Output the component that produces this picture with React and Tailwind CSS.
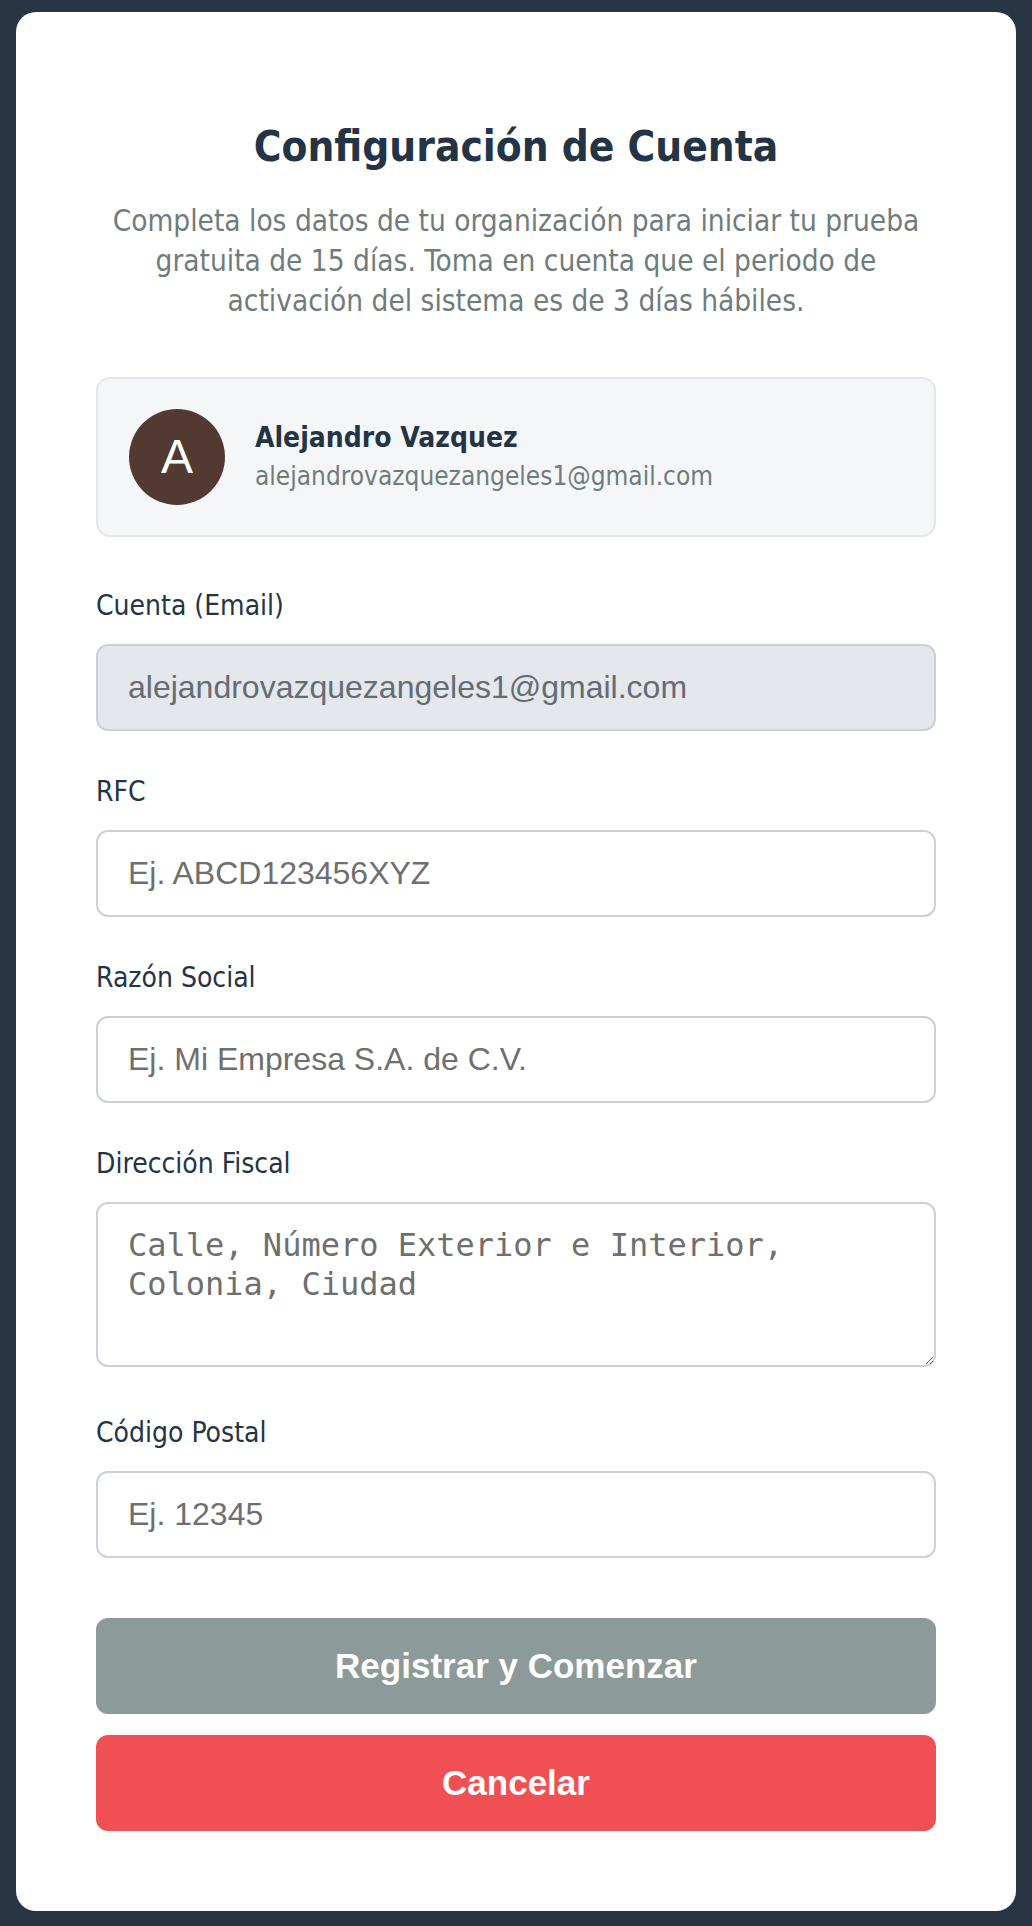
export default function App() {
  const font = { fontFamily: '"DejaVu Sans Condensed", "DejaVu Sans", sans-serif' };
  return (
    <div className="min-h-[1926px] bg-[#283545] px-4 pt-[12px] pb-4">
      <div className="bg-white rounded-[20px] px-[80px] pt-[109px] pb-[80px]" style={font}>
        {/* Encabezado */}
        <div className="text-center">
          <h1 className="text-[42px] leading-[52px] font-bold text-[#243447]">Configuración de Cuenta</h1>
          <p className="mt-[28px] text-[29.5px] leading-[40px] text-[#6f7c7c]">
            Completa los datos de tu organización para iniciar tu prueba gratuita de 15 días. Toma en cuenta que el periodo de activación del sistema es de 3 días hábiles.
          </p>
        </div>

        {/* Usuario */}
        <div className="mt-[56px] h-[160px] flex items-center gap-[30px] px-[31px] bg-[#f5f6f8] border-2 border-[#e3e6ea] rounded-[14px]">
          <div className="w-[96px] h-[96px] rounded-full bg-[#523a32] flex items-center justify-center text-white text-[48px] shrink-0" style={{ fontFamily: '"Liberation Sans", Arial, sans-serif' }}>
            A
          </div>
          <div>
            <p className="text-[28px] leading-[38px] font-bold text-[#243447]">Alejandro Vazquez</p>
            <p className="text-[26px] leading-[38px] text-[#707c7c]">alejandrovazquezangeles1@gmail.com</p>
          </div>
        </div>

        {/* Formulario */}
        <form className="mt-[48px]">
          <Field label="Cuenta (Email)">
            <input
              disabled
              value="alejandrovazquezangeles1@gmail.com"
              readOnly
              className="w-full h-[87px] px-[30px] bg-[#e4e7eb] border-2 border-[#ccd1d6] rounded-[12px] text-[32px] text-[#646c74] outline-none"
              style={{ fontFamily: '"Liberation Sans", Arial, sans-serif' }}
            />
          </Field>
          <Field label="RFC">
            <TextInput placeholder="Ej. ABCD123456XYZ" />
          </Field>
          <Field label="Razón Social">
            <TextInput placeholder="Ej. Mi Empresa S.A. de C.V." />
          </Field>
          <Field label="Dirección Fiscal">
            <textarea
              placeholder="Calle, Número Exterior e Interior, Colonia, Ciudad"
              className="w-full h-[165px] mb-[5px] px-[30px] py-[22px] bg-white border-2 border-[#ccd1d6] rounded-[12px] text-[32px] leading-[39px] placeholder:text-[#6f6f6f] outline-none"
              style={{ fontFamily: '"DejaVu Sans Mono", "Liberation Mono", monospace' }}
            />
          </Field>
          <Field label="Código Postal">
            <TextInput placeholder="Ej. 12345" />
          </Field>

          <div className="mt-[60px] flex flex-col gap-[21px]" style={{ fontFamily: '"Liberation Sans", Arial, sans-serif' }}>
            <button type="button" className="h-[96px] w-full rounded-[12px] bg-[#8d9a9a] text-white font-bold text-[35px]">
              Registrar y Comenzar
            </button>
            <button type="button" className="h-[96px] w-full rounded-[12px] bg-[#f05053] text-white font-bold text-[35px]">
              Cancelar
            </button>
          </div>
        </form>
      </div>
    </div>
  );
}

function Field({ label, children }) {
  return (
    <div className="flex flex-col mb-[40px] last:mb-0">
      <label className="block text-[28px] leading-[42px] text-[#243447] mb-[17px]">{label}</label>
      {children}
    </div>
  );
}

function TextInput({ placeholder }) {
  return (
    <input
      type="text"
      placeholder={placeholder}
      className="w-full h-[87px] px-[30px] bg-white border-2 border-[#ccd1d6] rounded-[12px] text-[32px] placeholder:text-[#6f6f6f] outline-none"
      style={{ fontFamily: '"Liberation Sans", Arial, sans-serif' }}
    />
  );
}
